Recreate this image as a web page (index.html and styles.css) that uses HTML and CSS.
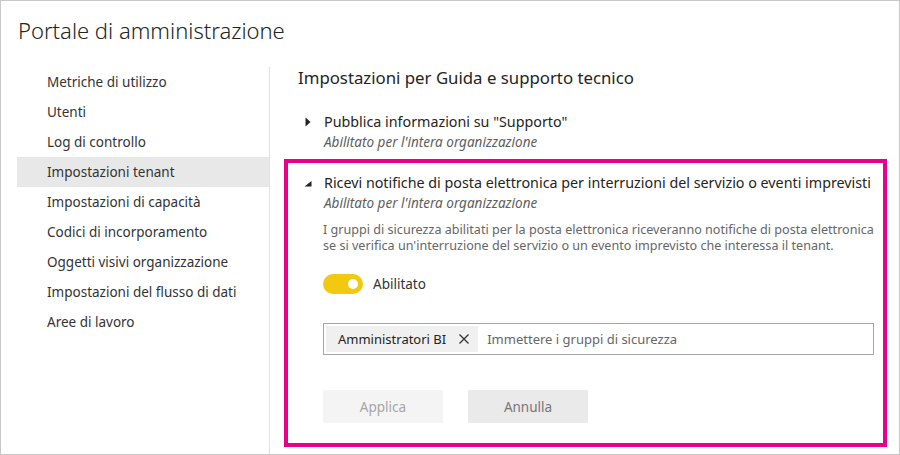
FILE: index.html
```html
<!DOCTYPE html>
<html lang="it">
<head>
<meta charset="utf-8">
<title>Portale di amministrazione</title>
<link rel="stylesheet" href="styles.css">
</head>
<body>
<div class="frame">
  <h1 class="title">Portale di amministrazione</h1>
  <div class="main">
    <nav class="sidebar">
      <div class="nav-item">Metriche di utilizzo</div>
      <div class="nav-item">Utenti</div>
      <div class="nav-item">Log di controllo</div>
      <div class="nav-item selected">Impostazioni tenant</div>
      <div class="nav-item">Impostazioni di capacità</div>
      <div class="nav-item">Codici di incorporamento</div>
      <div class="nav-item">Oggetti visivi organizzazione</div>
      <div class="nav-item">Impostazioni del flusso di dati</div>
      <div class="nav-item">Aree di lavoro</div>
    </nav>
    <section class="content">
      <h2 class="section-title">Impostazioni per Guida e supporto tecnico</h2>
      <div class="setting">
        <div class="setting-head">
          <svg class="caret" width="8" height="10" viewBox="0 0 8 10"><path d="M1.5 0.5 L6.5 5 L1.5 9.5 Z" fill="#252423"/></svg>
          <div>
            <div class="setting-name">Pubblica informazioni su "Supporto"</div>
            <div class="setting-state">Abilitato per l'intera organizzazione</div>
          </div>
        </div>
      </div>
      <div class="setting highlighted">
        <div class="setting-head">
          <svg class="caret" width="8" height="10" viewBox="0 0 8 10"><path d="M7.5 3 L7.5 8.5 L0.5 8.5 Z" fill="#252423"/></svg>
          <div>
            <div class="setting-name">Ricevi notifiche di posta elettronica per interruzioni del servizio o eventi imprevisti</div>
            <div class="setting-state">Abilitato per l'intera organizzazione</div>
          </div>
        </div>
        <div class="setting-body">
          <p class="desc">I gruppi di sicurezza abilitati per la posta elettronica riceveranno notifiche di posta elettronica<br>se si verifica un'interruzione del servizio o un evento imprevisto che interessa il tenant.</p>
          <div class="toggle-row">
            <span class="toggle"><span class="knob"></span></span>
            <span class="toggle-label">Abilitato</span>
          </div>
          <div class="picker">
            <span class="chip">Amministratori BI
              <svg class="chip-x" width="12" height="12" viewBox="0 0 12 12"><path d="M1.5 1.5 L10.5 10.5 M10.5 1.5 L1.5 10.5" stroke="#333" stroke-width="1.3"/></svg>
            </span>
            <span class="placeholder">Immettere i gruppi di sicurezza</span>
          </div>
          <div class="buttons">
            <button class="btn apply">Applica</button>
            <button class="btn cancel">Annulla</button>
          </div>
        </div>
      </div>
    </section>
  </div>
</div>
</body>
</html>
```
FILE: styles.css
```css
* { box-sizing: border-box; }
html, body { margin: 0; padding: 0; background: #fff; }
body {
  font-family: "Segoe UI", "Noto Sans", "Open Sans", sans-serif;
  color: #252423;
}
.frame {
  width: 900px;
  height: 455px;
  border: 1px solid #c8c8c8;
  overflow: hidden;
}
.title {
  margin: 0;
  height: 66px;
  padding: 13px 0 0 17px;
  font-size: 22px;
  font-weight: 300;
  line-height: 32px;
  color: #252423;
}
.main {
  display: flex;
  height: 387px;
}
.sidebar {
  flex: none;
  margin-left: 16px;
  width: 253px;
  border-right: 1px solid #e1e1e1;
}
.nav-item {
  height: 30px;
  line-height: 30px;
  padding-left: 30px;
  font-size: 13.5px;
  color: #333;
  white-space: nowrap;
}
.nav-item.selected { background: #e8e8e8; }
.content {
  flex: 1;
  min-width: 0;
  padding: 0 12px 0 14px;
}
.section-title {
  margin: 0 0 9px 0;
  padding-left: 14px;
  font-size: 16.8px;
  font-weight: 400;
  line-height: 22px;
  color: #252423;
}
.setting {
  border: 4px solid transparent;
  padding: 10px 9px 3px 16px;
}
.setting.highlighted {
  border-color: #e8008a;
  padding-bottom: 20px;
}
.setting-head {
  display: flex;
  align-items: flex-start;
}
.caret {
  flex: none;
  margin: 5px 12px 0 0;
}
.setting-name {
  font-size: 14.3px;
  line-height: 20px;
  color: #252423;
  white-space: nowrap;
}
.setting-state {
  font-size: 13.5px;
  line-height: 20px;
  font-style: italic;
  color: #605e5c;
}
.setting-body {
  padding-left: 19px;
}
.desc {
  margin: 9px 0 0 0;
  font-size: 12.6px;
  line-height: 16px;
  color: #666;
  white-space: nowrap;
}
.toggle-row {
  display: flex;
  align-items: center;
  margin-top: 20px;
  height: 20px;
}
.toggle {
  width: 40px;
  height: 20px;
  border-radius: 10px;
  background: #f2c811;
  display: flex;
  align-items: center;
  justify-content: flex-end;
  padding-right: 5px;
}
.knob {
  width: 10px;
  height: 10px;
  border-radius: 50%;
  background: #fff;
}
.toggle-label {
  margin-left: 10px;
  font-size: 13.5px;
  color: #333;
}
.picker {
  margin-top: 29px;
  height: 32px;
  border: 1px solid #a6a6a6;
  padding: 2px;
  display: flex;
  align-items: center;
}
.chip {
  height: 26px;
  background: #f0f0f0;
  display: flex;
  align-items: center;
  padding: 0 8px 0 12px;
  font-size: 13px;
  color: #252423;
}
.chip-x { margin-left: 12px; }
.placeholder {
  margin-left: 9px;
  font-size: 13px;
  color: #666;
}
.buttons {
  display: flex;
  gap: 25px;
  margin-top: 35px;
}
.btn {
  width: 120px;
  height: 33px;
  border: none;
  font-family: inherit;
  font-size: 13.5px;
}
.btn.apply { background: #f4f4f4; color: #a6a6a6; }
.btn.cancel { background: #eaeaea; color: #777; }
```
